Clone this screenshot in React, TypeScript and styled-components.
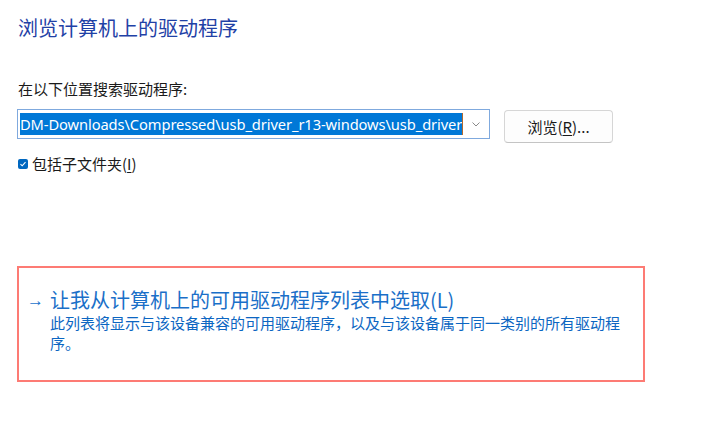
import React from "react";
import styled, { createGlobalStyle } from "styled-components";

const Global = createGlobalStyle`
  html, body { margin: 0; padding: 0; background: #ffffff; }
  body { font-family: "Noto Sans", "Noto Sans CJK SC", sans-serif; }
`;

const Page = styled.div`
  width: 719px;
  height: 427px;
  box-sizing: border-box;
  padding: 14px 0 0 17px;
  display: flex;
  flex-direction: column;
  background: #fff;
  overflow: hidden;
`;

const Title = styled.h1`
  margin: 0 0 0 1px;
  font-family: "Noto Sans CJK SC", sans-serif;
  font-weight: 400;
  font-size: 20px;
  line-height: 28px;
  color: #1f41a6;
`;

const Label = styled.div`
  margin: 37px 0 0 1px;
  font-family: "Noto Sans CJK SC", sans-serif;
  font-size: 15px;
  line-height: 20px;
  color: #1a1a1a;
`;

const PathRow = styled.div`
  display: flex;
  align-items: flex-start;
  gap: 14px;
  margin-top: 10px;
`;

const ComboBox = styled.div`
  width: 473px;
  height: 30px;
  box-sizing: border-box;
  border: 1px solid #7fa9de;
  background: #fff;
  display: flex;
  align-items: center;
  padding: 0 0 0 2px;
`;

const Field = styled.div`
  flex: 1;
  overflow: hidden;
  white-space: nowrap;
  display: flex;
  align-items: center;
`;

const Selected = styled.span`
  background: #0078d7;
  color: #fff;
  font-family: "Noto Sans", sans-serif;
  font-size: 14.7px;
  line-height: 22px;
  letter-spacing: -0.1px;
`;

const Caret = styled.span`
  display: inline-block;
  flex: none;
  width: 1px;
  height: 22px;
  background: #b3692c;
`;

const Chevron = styled.div`
  width: 26px;
  flex: none;
  display: flex;
  justify-content: center;
  align-items: center;
`;

const Button = styled.button`
  margin-top: 1px;
  width: 109px;
  height: 33px;
  box-sizing: border-box;
  border: 1px solid #d6d6d6;
  border-bottom-color: #c4c4c4;
  border-radius: 4px;
  background: #fdfdfd;
  font-family: "Noto Sans CJK SC", sans-serif;
  font-size: 15px;
  color: #1a1a1a;
  padding: 0;
  display: flex;
  align-items: center;
  justify-content: center;
`;

const Accel = styled.span`
  text-decoration: underline;
  text-underline-offset: 2px;
`;

const CheckRow = styled.label`
  display: flex;
  align-items: center;
  gap: 4px;
  margin: 11px 0 0 1px;
  font-family: "Noto Sans CJK SC", sans-serif;
  font-size: 15px;
  line-height: 20px;
  color: #1a1a1a;
`;

const CheckBox = styled.span`
  width: 10px;
  height: 10px;
  border-radius: 2px;
  background: #0067c0;
  display: inline-flex;
  align-items: center;
  justify-content: center;
`;

const OptionBox = styled.div`
  margin-top: 92px;
  width: 628px;
  height: 116px;
  box-sizing: border-box;
  border: 2px solid #fd7b74;
  padding: 19px 0 0 8px;
  display: flex;
  gap: 7px;
`;

const Arrow = styled.div`
  font-family: "Noto Sans", sans-serif;
  font-size: 17px;
  line-height: 26px;
  color: #1a73cc;
  width: 16px;
`;

const OptionText = styled.div`
  display: flex;
  flex-direction: column;
  width: 571px;
`;

const OptionTitle = styled.div`
  font-family: "Noto Sans CJK SC", sans-serif;
  font-size: 20px;
  line-height: 26px;
  color: #1a6fc8;
`;

const OptionDesc = styled.div`
  font-family: "Noto Sans CJK SC", sans-serif;
  font-size: 15px;
  line-height: 20px;
  color: #0c66c2;
`;

export default function App() {
  return (
    <>
      <Global />
      <Page>
        <Title>浏览计算机上的驱动程序</Title>
        <Label>在以下位置搜索驱动程序:</Label>
        <PathRow>
          <ComboBox>
            <Field>
              <Selected>DM-Downloads\Compressed\usb_driver_r13-windows\usb_driver</Selected>
              <Caret />
            </Field>
            <Chevron>
              <svg width="8" height="5" viewBox="0 0 8 5">
                <path d="M0.5 0.5 L4 4 L7.5 0.5" fill="none" stroke="#8a8a8a" strokeWidth="1" />
              </svg>
            </Chevron>
          </ComboBox>
          <Button>
            浏览(<Accel>R</Accel>)...
          </Button>
        </PathRow>
        <CheckRow>
          <CheckBox>
            <svg width="8" height="8" viewBox="0 0 8 8">
              <path d="M1.5 4.2 L3.2 5.8 L6.5 2.2" fill="none" stroke="#fff" strokeWidth="1.1" />
            </svg>
          </CheckBox>
          <span>
            包括子文件夹(<Accel>I</Accel>)
          </span>
        </CheckRow>
        <OptionBox>
          <Arrow>→</Arrow>
          <OptionText>
            <OptionTitle>让我从计算机上的可用驱动程序列表中选取(L)</OptionTitle>
            <OptionDesc>
              此列表将显示与该设备兼容的可用驱动程序，以及与该设备属于同一类别的所有驱动程序。
            </OptionDesc>
          </OptionText>
        </OptionBox>
      </Page>
    </>
  );
}
